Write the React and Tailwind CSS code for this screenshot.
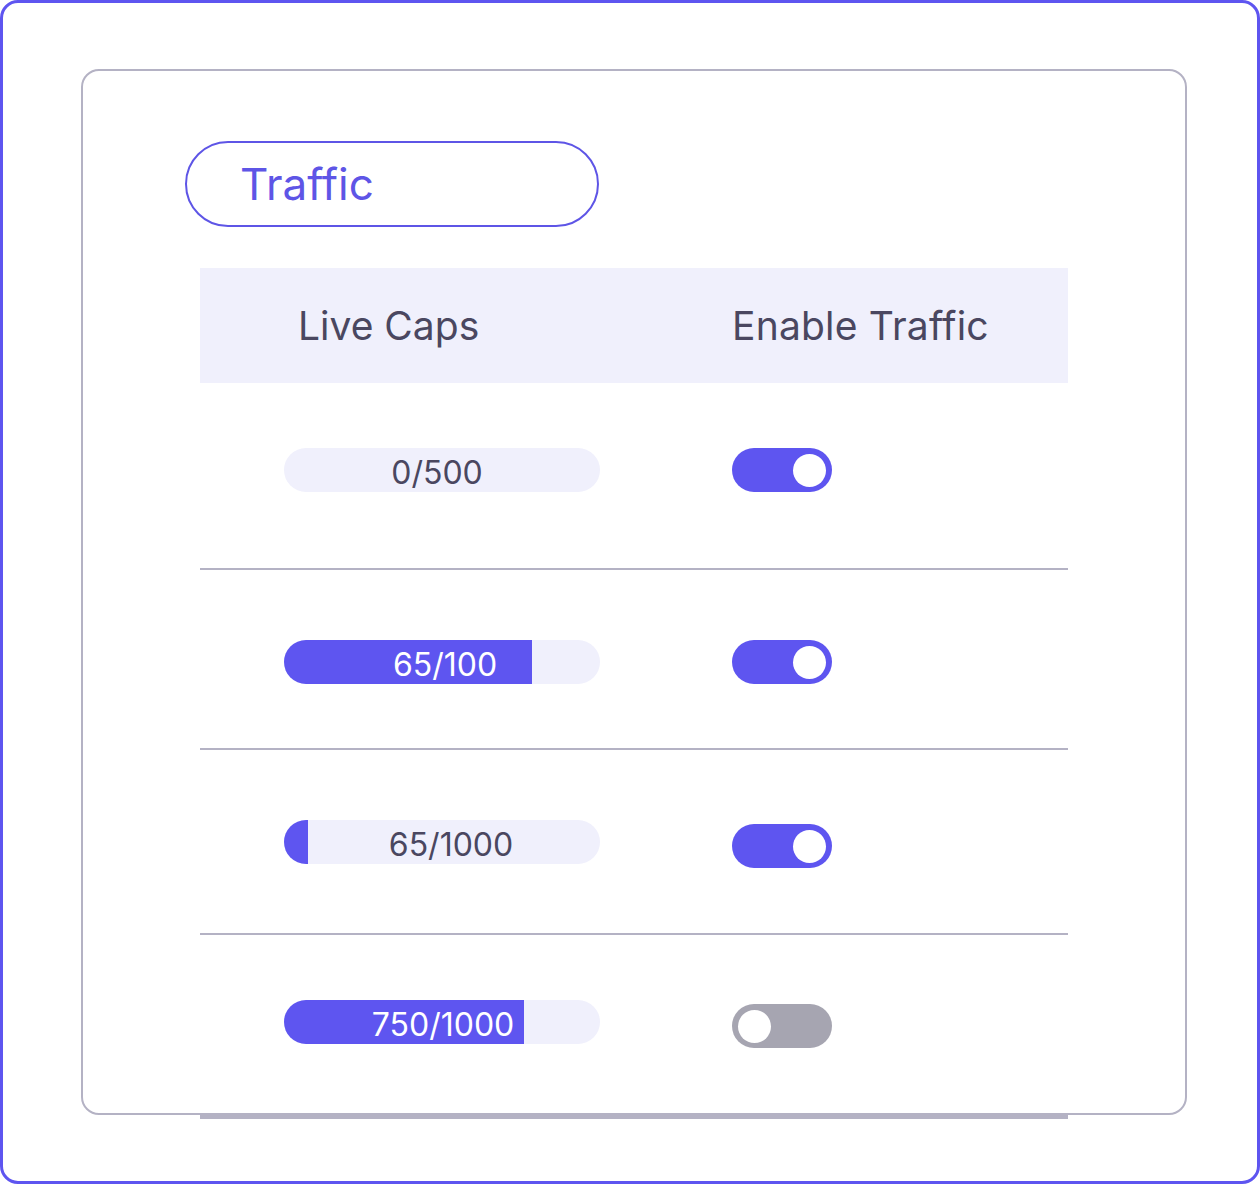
import React from "react";

const rows = [
  { used: 0, cap: 500, fill: 0, shift: "-translate-x-[5px]", pad: "pt-[65px]", h: "h-[187px]", tOff: "mt-0", on: true, border: "border-b-2" },
  { used: 65, cap: 100, fill: 248, shift: "translate-x-[3px]", pad: "pt-[70px]", h: "h-[180px]", tOff: "mt-0", on: true, border: "border-b-2" },
  { used: 65, cap: 1000, fill: 24, shift: "translate-x-[9px]", pad: "pt-[70px]", h: "h-[185px]", tOff: "mt-[4px]", on: true, border: "border-b-2" },
  { used: 750, cap: 1000, fill: 240, shift: "translate-x-[1px]", pad: "pt-[65px]", h: "h-[184px]", tOff: "mt-[4px]", on: false, border: "border-b-4" },
];

function CapBar({ used, cap, fill, shift }) {
  const light = fill > 100;
  return (
    <div className="relative w-[316px] h-[44px] rounded-full bg-[#f0f0fc] overflow-hidden">
      <div className="absolute left-0 top-0 h-full bg-[#5e55f0]" style={{ width: fill }} />
      <div
        className={`relative flex h-full items-center justify-center pt-[5px] text-[32px] leading-none ${shift} ${
          light ? "text-white" : "text-[#4a4760]"
        }`}
      >
        {used}/{cap}
      </div>
    </div>
  );
}

function Toggle({ on }) {
  return (
    <div
      className={`flex h-[44px] w-[100px] items-center rounded-full px-[6px] ${
        on ? "justify-end bg-[#5e55f0]" : "justify-start bg-[#a6a5b1]"
      }`}
    >
      <div className="h-[33px] w-[33px] rounded-full bg-white" />
    </div>
  );
}

export default function App() {
  return (
    <div
      className="w-[1260px] h-[1184px] bg-white"
      style={{ fontFamily: "Inter, 'Noto Sans', sans-serif" }}
    >
      <div className="h-full w-full rounded-[18px] border-[3px] border-[#5e55f0] pl-[78px] pt-[66px]">
        <div className="h-[1046px] w-[1106px] rounded-[18px] border-2 border-[#b4b2c4] pl-[102px] pt-[70px]">
          <div className="flex h-[86px] w-[414px] items-center rounded-full border-2 border-[#5e55e6] pl-[53px]">
            <span className="text-[44px] leading-none text-[#5e55e6]">Traffic</span>
          </div>

          <div className="ml-[15px] mt-[41px] w-[868px]">
            <div className="flex h-[115px] items-center bg-[#f0f0fc] text-[39px] leading-none text-[#4a4760]">
              <div className="w-[532px] pl-[98px]">Live Caps</div>
              <div className="tracking-[0.2px]">Enable Traffic</div>
            </div>

            {rows.map((r, i) => (
              <div key={i} className={`flex items-start ${r.h} ${r.pad} ${r.border} border-[#b4b2c4]`}>
                <div className="w-[532px] pl-[84px]">
                  <CapBar used={r.used} cap={r.cap} fill={r.fill} shift={r.shift} />
                </div>
                <div className={r.tOff}>
                  <Toggle on={r.on} />
                </div>
              </div>
            ))}
          </div>
        </div>
      </div>
    </div>
  );
}
